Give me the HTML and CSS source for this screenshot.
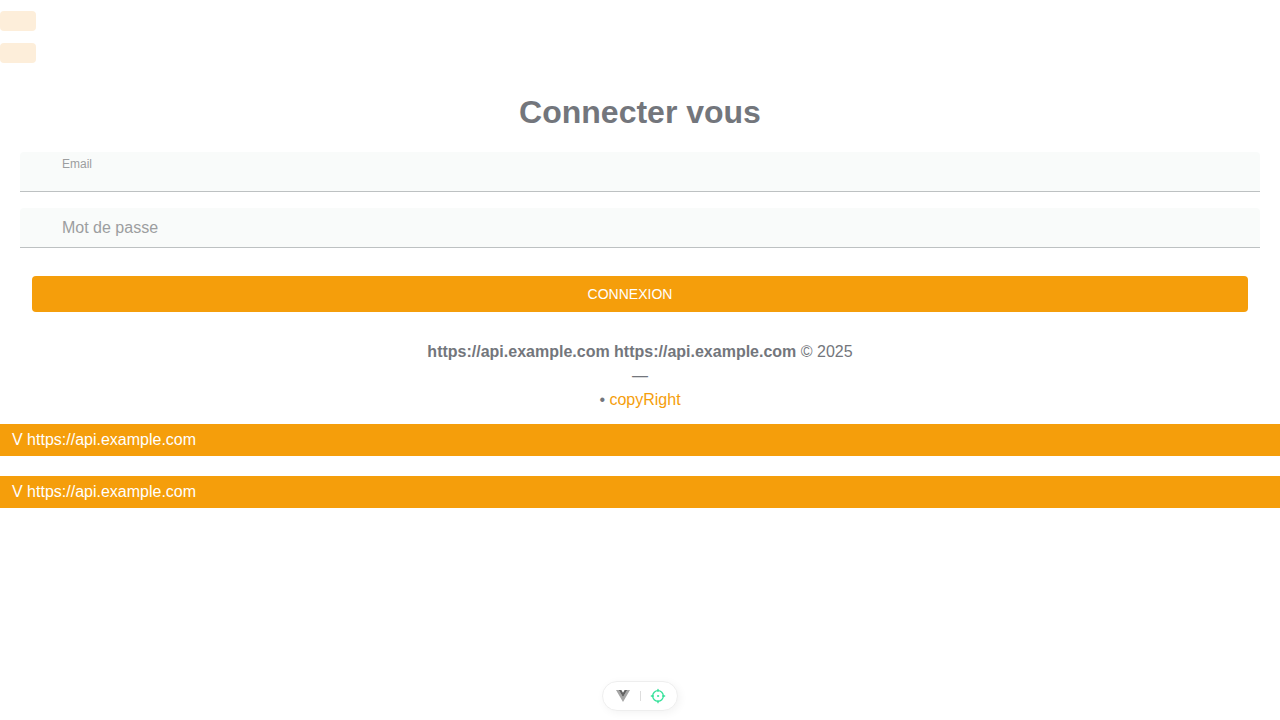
FILE: index.html
```html
<!DOCTYPE html>
<html lang="fr">
<head>
<meta charset="utf-8">
<title>Connexion</title>
<link rel="stylesheet" href="styles.css">
</head>
<body>
<nav class="quick-nav">
  <button class="chip" type="button" aria-label="Menu"></button>
  <button class="chip" type="button" aria-label="Options"></button>
</nav>
<main class="login">
  <h1 class="title">Connecter vous</h1>
  <form class="form">
    <div class="field field-active">
      <label class="label" for="email">Email</label>
      <input class="input" id="email" type="email">
    </div>
    <div class="field">
      <label class="label" for="password">Mot de passe</label>
      <input class="input" id="password" type="password">
    </div>
    <button class="submit" type="submit">CONNEXION</button>
  </form>
</main>
<footer class="footer">
  <div><strong>https://api.example.com https://api.example.com</strong> © 2025</div>
  <div>—</div>
  <div>• <a class="link" href="#">copyRight</a></div>
</footer>
<div class="versions">
  <div class="version">V https://api.example.com</div>
  <div class="version">V https://api.example.com</div>
</div>
<div class="devtools">
  <button class="tool" type="button" aria-label="Vue DevTools">
    <svg width="16" height="16" viewBox="-18 -16 292 292"><path fill="#a5a5a5" d="m0 20l128 220.800L256 20h-51.200L128 152.480L50.560 20z"/><path fill="#636363" d="M50.560 20L128 153.280L204.800 20h-47.360L128 70.400L97.920 20z"/></svg>
  </button>
  <span class="divider"></span>
  <button class="tool" type="button" aria-label="Inspector">
    <svg width="16" height="16" viewBox="0 0 24 24" fill="none" stroke="#35e19a" stroke-width="2" stroke-linecap="round"><circle cx="12" cy="12" r="8"/><circle cx="12" cy="12" r="1" fill="#35e19a" stroke-width="1"/><path d="M12 2v3M12 19v3M2 12h3M19 12h3"/></svg>
  </button>
</div>
</body>
</html>
```
FILE: styles.css
```css
* {
  box-sizing: border-box;
}

body {
  margin: 0;
  background: #fff;
  color: #73767c;
  font: 16px/24px "Liberation Sans", Arial, sans-serif;
}

button,
input {
  font: inherit;
  border: 0;
}

.quick-nav {
  display: flex;
  flex-direction: column;
  align-items: flex-start;
  gap: 12px;
  padding: 11px 0 13px;
}

.chip {
  width: 36px;
  height: 20px;
  padding: 0;
  border-radius: 4px;
  background: #fdeeda;
}

.login {
  padding: 12px 20px 0;
}

.title {
  margin: 0 0 16px;
  font-size: 32px;
  line-height: 48px;
  text-align: center;
}

.form {
  display: flex;
  flex-direction: column;
  gap: 16px;
}

.field {
  display: grid;
  height: 40px;
  border-bottom: 1px solid #bdc1c2;
  border-radius: 4px 4px 0 0;
  background: #f9fbfa;
}

.label,
.input {
  grid-area: 1 / 1;
  padding: 0 42px;
}

.label {
  align-self: center;
  color: #9c9ea0;
  pointer-events: none;
}

.field-active .label {
  align-self: start;
  padding-top: 4px;
  font-size: 12px;
  line-height: 16px;
}

.input {
  width: 100%;
  background: none;
  outline: none;
}

.submit {
  height: 36px;
  margin: 12px 12px 0;
  padding: 0 20px 0 0;
  border-radius: 4px;
  background: #f59e0b;
  color: #fff;
  font-size: 14px;
}

.footer {
  padding: 28px 20px 12px;
  text-align: center;
}

.link {
  color: #f59e0b;
  text-decoration: none;
}

.versions {
  display: flex;
  flex-direction: column;
  gap: 20px;
}

.version {
  padding: 4px 12px;
  background: #f59e0b;
  color: #fff;
}

.devtools {
  position: fixed;
  bottom: 9px;
  left: 50%;
  transform: translateX(-50%);
  display: flex;
  align-items: center;
  justify-content: center;
  gap: 9px;
  width: 76px;
  height: 30px;
  border: 1px solid #eee;
  border-radius: 15px;
  background: #fff;
  box-shadow: 2px 2px 8px rgba(0, 0, 0, 0.05);
}

.tool {
  display: flex;
  padding: 0;
  background: none;
}

.divider {
  width: 1px;
  height: 10px;
  background: #ddd;
}
```
